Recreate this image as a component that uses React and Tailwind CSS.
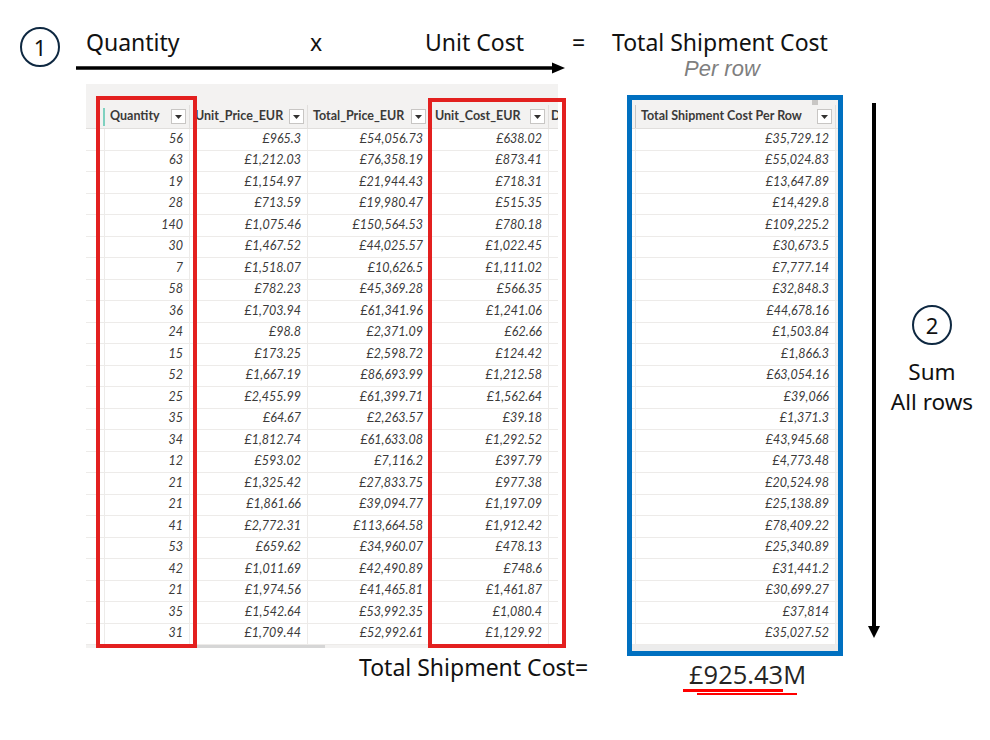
import React from 'react';

const leftRows = [
    ['56', '£965.3', '£54,056.73', '£638.02'],
    ['63', '£1,212.03', '£76,358.19', '£873.41'],
    ['19', '£1,154.97', '£21,944.43', '£718.31'],
    ['28', '£713.59', '£19,980.47', '£515.35'],
    ['140', '£1,075.46', '£150,564.53', '£780.18'],
    ['30', '£1,467.52', '£44,025.57', '£1,022.45'],
    ['7', '£1,518.07', '£10,626.5', '£1,111.02'],
    ['58', '£782.23', '£45,369.28', '£566.35'],
    ['36', '£1,703.94', '£61,341.96', '£1,241.06'],
    ['24', '£98.8', '£2,371.09', '£62.66'],
    ['15', '£173.25', '£2,598.72', '£124.42'],
    ['52', '£1,667.19', '£86,693.99', '£1,212.58'],
    ['25', '£2,455.99', '£61,399.71', '£1,562.64'],
    ['35', '£64.67', '£2,263.57', '£39.18'],
    ['34', '£1,812.74', '£61,633.08', '£1,292.52'],
    ['12', '£593.02', '£7,116.2', '£397.79'],
    ['21', '£1,325.42', '£27,833.75', '£977.38'],
    ['21', '£1,861.66', '£39,094.77', '£1,197.09'],
    ['41', '£2,772.31', '£113,664.58', '£1,912.42'],
    ['53', '£659.62', '£34,960.07', '£478.13'],
    ['42', '£1,011.69', '£42,490.89', '£748.6'],
    ['21', '£1,974.56', '£41,465.81', '£1,461.87'],
    ['35', '£1,542.64', '£53,992.35', '£1,080.4'],
    ['31', '£1,709.44', '£52,992.61', '£1,129.92'],
];

const shipmentRows = [
    '£35,729.12', '£55,024.83', '£13,647.89', '£14,429.8', '£109,225.2', '£30,673.5',
    '£7,777.14', '£32,848.3', '£44,678.16', '£1,503.84', '£1,866.3', '£63,054.16',
    '£39,066', '£1,371.3', '£43,945.68', '£4,773.48', '£20,524.98', '£25,138.89',
    '£78,409.22', '£25,340.89', '£31,441.2', '£30,699.27', '£37,814', '£35,027.52',
];

const slideFont = "font-['Noto_Sans',sans-serif]";
const gridFont = "font-['Lato',sans-serif]";

function Dropdown() {
    return (
        <span className="flex items-center justify-center w-[15px] h-[15px] bg-white border border-[#c8c6c4] shrink-0">
            <svg width="7" height="4" viewBox="0 0 7 4">
                <polygon points="0,0 7,0 3.5,4" fill="#323130" />
            </svg>
        </span>
    );
}

function HeaderCell({ label, width }) {
    return (
        <div className={`${width} h-full flex items-center justify-between pl-[5px] pr-[3px] border-r border-[#e1dfdd] shrink-0 overflow-hidden`}>
            <span className="text-[12.5px] font-bold text-[#3b3a39] whitespace-nowrap">{label}</span>
            <Dropdown />
        </div>
    );
}

function Cell({ value, width }) {
    return (
        <div className={`${width} h-full flex items-center justify-end pr-[6px] border-r border-[#edebe9] shrink-0`}>
            <span className="text-[12.5px] italic text-[#3b3a39] whitespace-nowrap">{value}</span>
        </div>
    );
}

function Circle({ n }) {
    return (
        <div className={`w-10 h-10 rounded-full border-2 border-[#0e2841] flex items-center justify-center text-[22px] text-[#111] shrink-0 ${slideFont}`}>
            {n}
        </div>
    );
}

function LeftGrid() {
    return (
        <div className={`ml-[86px] w-[472px] h-[564px] flex flex-col overflow-hidden ${gridFont}`}>
            <div className="h-[21px] bg-[#f3f2f1]" />
            <div className="h-[24px] flex bg-[#f3f2f1] border-b border-[#e1dfdd]">
                <div className="w-[19px] h-full flex items-center justify-end shrink-0">
                    <span className="w-[3px] h-[18px] border-r-2 border-[#7fd1c0]" />
                </div>
                <HeaderCell label="Quantity" width="w-[85px]" />
                <HeaderCell label="Unit_Price_EUR" width="w-[118px]" />
                <HeaderCell label="Total_Price_EUR" width="w-[122px]" />
                <HeaderCell label="Unit_Cost_EUR" width="w-[119px]" />
                <div className="w-[9px] h-full flex items-center pl-[2px] text-[12.5px] font-bold text-[#3b3a39] shrink-0 overflow-hidden">D</div>
            </div>
            {leftRows.map((r, i) => (
                <div key={i} className="h-[21.5px] flex border-b border-[#edebe9] bg-white shrink-0">
                    <div className="w-[19px] h-full border-r border-[#edebe9] shrink-0" />
                    <Cell value={r[0]} width="w-[85px]" />
                    <Cell value={r[1]} width="w-[118px]" />
                    <Cell value={r[2]} width="w-[122px]" />
                    <Cell value={r[3]} width="w-[119px]" />
                    <div className="w-[9px] h-full shrink-0" />
                </div>
            ))}
            <div className="flex-1 bg-[#f3f2f1] flex">
                <div className="ml-[14px] w-[225px] h-full bg-[#d6d6d6]" />
            </div>
        </div>
    );
}

function ShipmentGrid() {
    return (
        <div className={`ml-[69px] mt-[11px] w-[216px] h-[561px] border-[5px] border-[#0070c0] flex flex-col overflow-hidden shrink-0 ${gridFont}`}>
            <div className="h-[5px] bg-[#f3f2f1] flex justify-end">
                <div className="mr-[20px] w-[6px] h-full bg-[#c8c6c4]" />
            </div>
            <div className="h-[24px] flex bg-[#f3f2f1] border-b border-[#e1dfdd]">
                <div className="w-[4px] h-full border-r border-[#c8c6c4] shrink-0" />
                <HeaderCell label="Total Shipment Cost Per Row" width="w-[200px]" />
                <div className="w-[2px] h-full shrink-0" />
            </div>
            {shipmentRows.map((v, i) => (
                <div key={i} className="h-[21.5px] flex border-b border-[#edebe9] bg-white shrink-0">
                    <div className="w-[4px] h-full border-r border-[#edebe9] shrink-0" />
                    <Cell value={v} width="w-[200px]" />
                    <div className="w-[2px] h-full bg-[#f3f2f1] shrink-0" />
                </div>
            ))}
            <div className="flex-1 bg-[#ececec]" />
        </div>
    );
}

export default function App() {
    return (
        <div className="w-[990px] h-[740px] bg-white overflow-hidden text-[#111]">
            {/* step 1 header */}
            <div className="h-[84px] flex items-start">
                <div className="ml-[20px] mt-[27px]">
                    <Circle n="1" />
                </div>
                <div className={`ml-[16px] flex flex-col ${slideFont}`}>
                    <div className="mt-[28px] h-[28px] flex items-center pl-[10px] text-[23px] leading-[28px]">
                        <span className="w-[224px]">Quantity</span>
                        <span className="w-[115px]">x</span>
                        <span className="w-[147px]">Unit Cost</span>
                        <span className="w-[40px]">=</span>
                        <span className="whitespace-nowrap">Total Shipment Cost</span>
                    </div>
                    <div className="mt-[2px] h-[22px] flex items-start">
                        <svg width="489" height="20" viewBox="0 0 489 20" className="shrink-0">
                            <line x1="0" y1="10" x2="478" y2="10" stroke="#000" strokeWidth="3.5" />
                            <polygon points="476,4.5 489,10 476,15.5" fill="#000" />
                        </svg>
                        <span className="ml-[119px] text-[22px] leading-[22px] italic text-[#7f7f7f] font-['Liberation_Sans',sans-serif]">Per row</span>
                    </div>
                </div>
            </div>

            {/* grids */}
            <div className="relative h-[572px] flex items-start">
                <LeftGrid />
                <ShipmentGrid />
                <svg width="12" height="535" viewBox="0 0 12 535" className="ml-[25px] mt-[19px] shrink-0">
                    <line x1="6" y1="0" x2="6" y2="525" stroke="#000" strokeWidth="4" />
                    <polygon points="0,523 12,523 6,535" fill="#000" />
                </svg>
                <div className={`ml-[12px] mt-[221px] w-[80px] flex flex-col items-center ${slideFont}`}>
                    <Circle n="2" />
                    <div className="mt-[12px] text-[22.5px] leading-[30px] text-center whitespace-nowrap">
                        <div>Sum</div>
                        <div>All rows</div>
                    </div>
                </div>
                <div className="absolute left-[96px] top-[12px] w-[101px] h-[552px] border-4 border-[#e3201f] pointer-events-none" />
                <div className="absolute left-[428px] top-[14px] w-[138px] h-[550px] border-4 border-[#e3201f] pointer-events-none" />
            </div>

            {/* total */}
            <div className="flex items-start">
                <span className={`ml-[359px] w-[324px] text-[23px] leading-[22px] whitespace-nowrap ${slideFont}`}>Total Shipment Cost=</span>
                <div className="flex flex-col">
                    <span className="pl-[6px] mt-[3px] text-[25.5px] leading-[30px] text-[#252423] font-['Open_Sans',sans-serif]">£925.43M</span>
                    <div className="w-[100px] h-[3px] bg-[#ff0000]" />
                    <div className="ml-[14px] mt-[1px] w-[100px] h-[2px] bg-[#ff0000]" />
                </div>
            </div>
        </div>
    );
}
